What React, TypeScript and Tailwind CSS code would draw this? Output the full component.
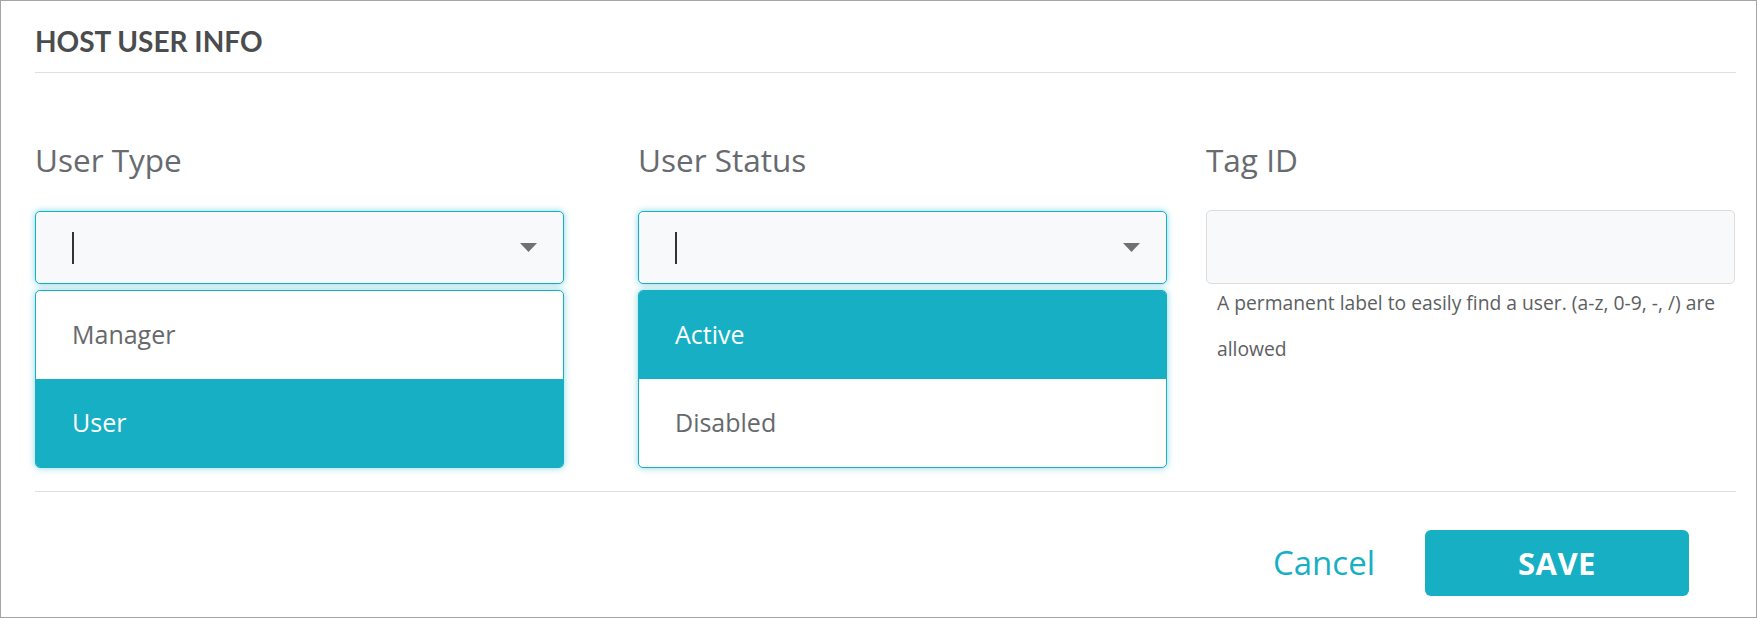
import React from "react";

const teal = "bg-[#17afc4]";

function Caret() {
  return (
    <svg width="17" height="9" viewBox="0 0 17 9" className="shrink-0">
      <path d="M0 0 H17 L8.5 9 Z" fill="#6f7173" />
    </svg>
  );
}

function SelectBox() {
  return (
    <div className="flex h-[73px] items-center justify-between rounded-[5px] border border-[#17afc4] bg-[#f7f9fa] pl-[36px] pr-[26px] shadow-[0_0_6px_rgba(23,175,196,0.55)]">
      <span className="block h-[32px] w-[2px] bg-[#333]" />
      <Caret />
    </div>
  );
}

function Options({ items, active }: { items: string[]; active: string }) {
  return (
    <div className="mt-[6px] overflow-hidden rounded-[5px] border border-[#17afc4] bg-white shadow-[0_0_7px_rgba(23,175,196,0.5)]">
      {items.map((it) => (
        <div
          key={it}
          className={`flex h-[88px] items-center pl-[36px] text-[25px] ${
            it === active ? `${teal} text-white` : "text-[#66696c]"
          }`}
        >
          {it}
        </div>
      ))}
    </div>
  );
}

function Label({ children }: { children: React.ReactNode }) {
  return <div className="h-[31px] text-[31.5px] leading-[31px] text-[#676b6f]">{children}</div>;
}

export default function App() {
  return (
    <div className="flex h-[618px] flex-col border border-[#a5a5a5] bg-white pl-[34px] pr-[20px] font-['Open_Sans',sans-serif]">
      {/* Header */}
      <div className="h-[72px] border-b border-[#dedede] pt-[24px]">
        <h1 className="font-['Lato',sans-serif] text-[28px] font-bold leading-[1.2] text-[#4a4c4e]">
          HOST USER INFO
        </h1>
      </div>

      {/* Fields */}
      <div className="mt-[71px] flex">
        <div className="w-[529px]">
          <Label>User Type</Label>
          <div className="mt-[36px]">
            <SelectBox />
            <Options items={["Manager", "User"]} active="User" />
          </div>
        </div>
        <div className="ml-[74px] w-[529px]">
          <Label>User Status</Label>
          <div className="mt-[36px]">
            <SelectBox />
            <Options items={["Active", "Disabled"]} active="Active" />
          </div>
        </div>
        <div className="ml-[39px] w-[529px]">
          <Label>Tag ID</Label>
          <div className="mt-[35px] h-[74px] rounded-[5px] border border-[#dcdcdc] bg-[#f7f9fa]" />
          <p className="-mt-[4px] pl-[11px] text-[19.3px] leading-[46px] text-[#5c5f62]">
            A permanent label to easily find a user. (a-z, 0-9, -, /) are allowed
          </p>
        </div>
      </div>

      {/* Footer */}
      <div className="mt-auto mb-[21px] border-t border-[#dedede] pt-[38px]">
        <div className="flex items-center justify-end pr-[47px]">
          <button className="text-[33px] text-[#17afc4]">Cancel</button>
          <button
            className={`ml-[50px] h-[66px] w-[264px] rounded-[6px] ${teal} text-[31px] font-bold tracking-[0.5px] text-white`}
          >
            SAVE
          </button>
        </div>
      </div>
    </div>
  );
}
